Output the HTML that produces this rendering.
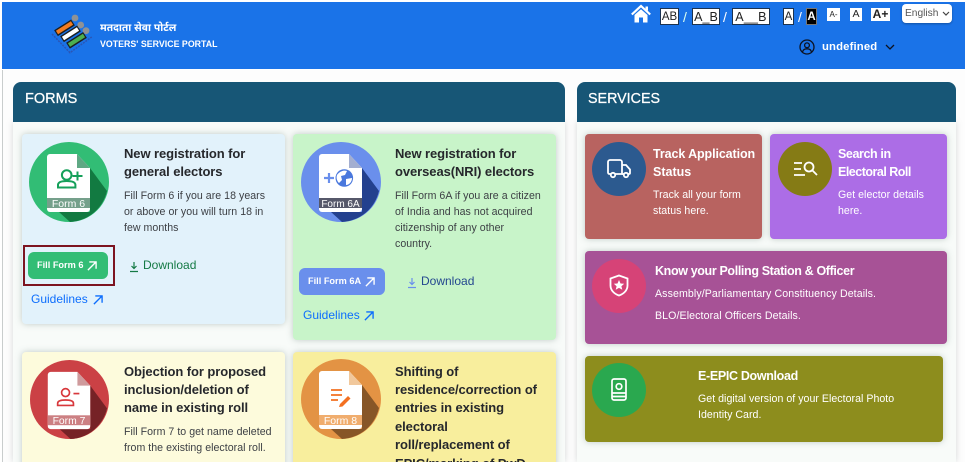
<!DOCTYPE html>
<html lang="en"><head><meta charset="utf-8"><title>Voters' Service Portal</title>
<style>
html{margin:0;padding:0;background:#fff;height:462px;overflow:hidden}
body{margin:0;padding:0;background:#fff;width:967px;height:462px;position:relative;overflow:hidden;font-family:"Liberation Sans",sans-serif}
.a{position:absolute}
.t{position:absolute;white-space:nowrap;line-height:18px}
.h{font-size:13px;font-weight:bold;color:#26282c;letter-spacing:-.08px}
.s{font-size:12.5px;font-weight:bold;color:#fff}
.d{font-size:10.6px;color:#3c3f44;letter-spacing:.03px}
.w{color:#fff}
.card{position:absolute;border-radius:4px;box-shadow:0 0 7px rgba(90,115,105,.35)}
.bx{position:absolute;background:#fff;color:#222;border:1px solid #1c3350;box-sizing:border-box;font-size:12.5px;text-align:center;white-space:nowrap;line-height:16px;height:17px}
.sm{position:absolute;background:#fff;color:#222;font-weight:bold;text-align:center;line-height:13px;height:13px}
.btn{position:absolute;border-radius:6px;color:#fff;font-size:9.2px;font-weight:bold;line-height:27px;height:27px;box-sizing:border-box;padding-left:9px;white-space:nowrap}
.l{font-size:12px;white-space:nowrap;position:absolute;line-height:16px}
svg{position:absolute;overflow:visible}
</style></head><body>
<div class="a" style="left:2px;top:70px;width:1px;height:392px;background:#c9cdcd"></div>
<div class="a" style="left:3px;top:70px;width:962px;height:392px;background:#fdfdfd"></div>
<div class="a" style="left:2px;top:2px;width:963px;height:67px;background:#1a73e8"></div>

<svg style="left:40px;top:10px" width="60" height="50" viewBox="0 0 60 50">
<circle cx="35" cy="8" r="3.400" fill="#8f9296"/><circle cx="40.700" cy="15" r="3.400" fill="#8f9296"/><circle cx="46" cy="20.700" r="3.400" fill="#8f9296"/>
<path d="M12 24l18 18.700L51.700 27" fill="none" stroke="#2b55b5" stroke-width="1.500" stroke-dasharray="2 1"/>
<g fill="none" stroke-linecap="butt"><path d="M16 23.200 33 12.400M22 29.200 39 18.400M28 35.700 45 24.900" stroke="#1b1f22" stroke-width="7"/><path d="M17 22.500 32 13" stroke="#f47c20" stroke-width="4"/><path d="M23 28.500 38 19" stroke="#fff" stroke-width="4"/><path d="M29 35 44 25.500" stroke="#4caf50" stroke-width="4"/></g>
</svg>
<div class="t w" style="left:100px;top:20px;font-family:'Liberation Sans','Noto Sans Devanagari',sans-serif;font-size:10.300px;font-weight:bold">मतदाता सेवा पोर्टल</div>
<div class="t w" style="left:100px;top:35px;font-size:8.800px;font-weight:bold;letter-spacing:.02px">VOTERS' SERVICE PORTAL</div>

<svg style="left:631px;top:5px" width="20" height="18" viewBox="0 0 20 18"><path d="M0.800 9.500 10 1l9.200 8.500" fill="none" stroke="#fff" stroke-width="2.200"/><path d="M3.500 10 10 4.200 16.500 10v7.500h-4.500v-5H8v5H3.500z" fill="#fff"/><rect x="14.500" y="1.500" width="2.500" height="4" fill="#fff"/></svg>
<div class="bx" style="left:660px;top:8px;width:19px;font-size:11.500px">AB</div>
<div class="t w" style="left:683px;top:8px;font-size:14px;color:#dfe">/</div>
<div class="bx" style="left:692px;top:8px;width:28px">A_B</div>
<div class="t w" style="left:723px;top:8px;font-size:14px">/</div>
<div class="bx" style="left:732px;top:8px;width:38px;letter-spacing:.2px">A__B</div>
<div class="bx" style="left:783px;top:8px;width:11px;font-size:11.500px">A</div>
<div class="t w" style="left:798px;top:8px;font-size:14px">/</div>
<div class="bx" style="left:806px;top:8px;width:11px;background:#000;color:#fff;border-color:#777;font-weight:bold;font-size:11.500px">A</div>
<div class="sm" style="left:827px;top:8px;width:13px;font-size:8px;font-weight:normal">A-</div>
<div class="sm" style="left:850px;top:8px;width:12px;font-size:10.500px;font-weight:normal">A</div>
<div class="sm" style="left:871px;top:8px;width:19px;font-size:12px">A+</div>
<div class="a" style="left:902px;top:4px;width:50px;height:19px;background:#fff;border-radius:4px;box-shadow:0 1px 2px rgba(0,0,0,.3);color:#555;font-size:10.200px;line-height:20px;padding-left:3px;box-sizing:border-box">English</div>
<svg style="left:942px;top:11px" width="8" height="6" viewBox="0 0 8 6"><path d="M1 1l3 3 3-3" fill="none" stroke="#444" stroke-width="1.200"/></svg>
<svg style="left:799px;top:39px" width="16" height="16" viewBox="0 0 16 16" fill="none" stroke="#0d1220" stroke-width="1.300"><circle cx="8" cy="8" r="7"/><circle cx="8" cy="6.300" r="2.400"/><path d="M3.500 13c.6-2.500 2.500-3.200 4.500-3.200s3.900.7 4.500 3.200"/></svg>
<div class="t w" style="left:822px;top:38px;font-size:11.300px;font-weight:bold;letter-spacing:.15px">undefined</div>
<svg style="left:885px;top:44px" width="10" height="7" viewBox="0 0 10 7"><path d="M1 1l4 4 4-4" fill="none" stroke="#0d1220" stroke-width="1.300"/></svg>

<div class="a" style="left:13px;top:122px;width:552px;height:340px;background:#f8fbf9;box-shadow:0 0 6px rgba(120,130,130,.3)"></div>
<div class="a" style="left:13px;top:82px;width:552px;height:40px;background:#175676;border-radius:8px 8px 0 0"></div>
<div class="t w" style="left:25px;top:90px;font-size:14.500px;line-height:18px;-webkit-text-stroke:.25px #fff">FORMS</div>
<div class="a" style="left:577px;top:122px;width:379px;height:340px;background:#f8fbf9;box-shadow:0 0 6px rgba(120,130,130,.3)"></div>
<div class="a" style="left:577px;top:82px;width:379px;height:40px;background:#175676;border-radius:8px 8px 0 0"></div>
<div class="t w" style="left:588px;top:90px;font-size:14.300px;line-height:18px;-webkit-text-stroke:.25px #fff">SERVICES</div>

<!-- Card 1 -->
<div class="card" style="left:22px;top:134px;width:263px;height:190px;background:#e2f2fb"></div>
<svg style="left:29px;top:142px" width="80" height="80" viewBox="0 0 80 80">
<circle cx="40" cy="40" r="40" fill="#32bd75"/>
<path d="M61 26 78 49A40 40 0 0 1 41 80L30 70H61z" fill="#127a41"/>
<path d="M18 15a3 3 0 0 1 3-3h27l13 14v41a3 3 0 0 1-3 3H21a3 3 0 0 1-3-3z" fill="#fff"/>
<path d="M48 12l13 14H48z" fill="#5fa884"/>
<rect x="18" y="56" width="43" height="10" fill="#75a08b"/>
<g fill="none" stroke="#15a05a" stroke-width="2"><circle cx="37.700" cy="33" r="4.800"/><path d="M29 45.500v-2.500c0-3 3-4 8.700-4s8.700 1 8.700 4v2.500z"/><path d="M43.500 34h10M48.500 29.500v9"/></g>
<text x="39.500" y="65" text-anchor="middle" font-size="10.500" fill="#fff" font-family="Liberation Sans">Form 6</text>
</svg>
<div class="t h" style="left:124px;top:145px">New registration for</div>
<div class="t h" style="left:124px;top:163px">general electors</div>
<div class="t d" style="left:124px;top:187px">Fill Form 6 if you are 18 years</div>
<div class="t d" style="left:124px;top:203px">or above or you will turn 18 in</div>
<div class="t d" style="left:124px;top:219px">few months</div>
<div class="a" style="left:23px;top:245px;width:92px;height:41px;border:2px solid #7d1420;box-sizing:border-box"></div>
<div class="btn" style="left:28px;top:252px;width:80px;background:#32bd75">Fill Form 6</div>
<svg style="left:87px;top:261px" width="10" height="10" viewBox="0 0 11 11"><path d="M1 10 10 1M2.500 1H10v7.500" fill="none" stroke="#fff" stroke-width="1.500"/></svg>
<svg style="left:129px;top:261px" width="10" height="12" viewBox="0 0 10 12"><path d="M5 1v6M2.500 5 5 7.500 7.500 5M1 10.500h8" fill="none" stroke="#157a45" stroke-width="1.200"/></svg>
<div class="l" style="left:143px;top:257px;color:#157a45">Download</div>
<div class="l" style="left:31px;top:291px;color:#0d6efd">Guidelines</div>
<svg style="left:93px;top:295px" width="10" height="10" viewBox="0 0 11 11"><path d="M1 10 10 1M2.500 1H10v7.500" fill="none" stroke="#0d6efd" stroke-width="1.500"/></svg>

<!-- Card 2 -->
<div class="card" style="left:293px;top:134px;width:263px;height:206px;background:#c8f4c9"></div>
<svg style="left:301px;top:142px" width="80" height="80" viewBox="0 0 80 80">
<circle cx="40" cy="40" r="40" fill="#6a8fec"/>
<path d="M61 26 78 49A40 40 0 0 1 41 80L30 70H61z" fill="#23408e"/>
<path d="M18 15a3 3 0 0 1 3-3h27l13 14v41a3 3 0 0 1-3 3H21a3 3 0 0 1-3-3z" fill="#fff"/>
<path d="M48 12l13 14H48z" fill="#a3aed0"/>
<rect x="18" y="56" width="43" height="10" fill="#56586a"/>
<circle cx="43.300" cy="36" r="8.800" fill="#4a78dd"/>
<path d="M36 33c3-4 7-5 10-4l-2 4-4 1 1 4-3 3c-2-2-3-5-2-8zM45 37l6-1c0 4-3 7-6 7z" fill="#fff"/>
<path d="M23 36h10M28 31v10" stroke="#6a8fec" stroke-width="2.200"/>
<text x="39.500" y="65" text-anchor="middle" font-size="10" fill="#fff" font-family="Liberation Sans">Form 6A</text>
</svg>
<div class="t h" style="left:395px;top:145px">New registration for</div>
<div class="t h" style="left:395px;top:163px">overseas(NRI) electors</div>
<div class="t d" style="left:395px;top:187px">Fill Form 6A if you are a citizen</div>
<div class="t d" style="left:395px;top:203px">of India and has not acquired</div>
<div class="t d" style="left:395px;top:219px">citizenship of any other</div>
<div class="t d" style="left:395px;top:235px">country.</div>
<div class="btn" style="left:299px;top:268px;width:86px;background:#6a8fec">Fill Form 6A</div>
<svg style="left:365px;top:277px" width="10" height="10" viewBox="0 0 11 11"><path d="M1 10 10 1M2.500 1H10v7.500" fill="none" stroke="#fff" stroke-width="1.500"/></svg>
<svg style="left:407px;top:277px" width="10" height="12" viewBox="0 0 10 12"><path d="M5 1v6M2.500 5 5 7.500 7.500 5M1 10.500h8" fill="none" stroke="#6a8fec" stroke-width="1.200"/></svg>
<div class="l" style="left:421px;top:273px;color:#24478f">Download</div>
<div class="l" style="left:303px;top:307px;color:#0d6efd">Guidelines</div>
<svg style="left:364px;top:311px" width="10" height="10" viewBox="0 0 11 11"><path d="M1 10 10 1M2.500 1H10v7.500" fill="none" stroke="#0d6efd" stroke-width="1.500"/></svg>

<!-- Card 3 -->
<div class="card" style="left:22px;top:352px;width:263px;height:120px;background:#fdfbdc"></div>
<svg style="left:30px;top:360px" width="79" height="79" viewBox="0 0 80 80">
<circle cx="40" cy="40" r="40" fill="#cb4145"/>
<path d="M61 26 78 49A40 40 0 0 1 41 80L30 70H61z" fill="#762226"/>
<path d="M18 15a3 3 0 0 1 3-3h27l13 14v41a3 3 0 0 1-3 3H21a3 3 0 0 1-3-3z" fill="#fff"/>
<path d="M48 12l13 14H48z" fill="#cf9a9c"/>
<rect x="18" y="56" width="43" height="10" fill="#cc8083"/>
<g fill="none" stroke="#d8383c" stroke-width="1.700"><circle cx="36" cy="33" r="4"/><path d="M28 46v-2c0-2.500 3-3.500 8-3.500s8 1 8 3.500v2z"/><path d="M44 34h6"/></g>
<text x="39.500" y="65" text-anchor="middle" font-size="10.500" fill="#fff" font-family="Liberation Sans">Form 7</text>
</svg>
<div class="t h" style="left:124px;top:363px">Objection for proposed</div>
<div class="t h" style="left:124px;top:381px">inclusion/deletion of</div>
<div class="t h" style="left:124px;top:399px">name in existing roll</div>
<div class="t d" style="left:124px;top:423px">Fill Form 7 to get name deleted</div>
<div class="t d" style="left:124px;top:439px">from the existing electoral roll.</div>

<!-- Card 4 -->
<div class="card" style="left:293px;top:352px;width:263px;height:120px;background:#f8ee9d"></div>
<svg style="left:301px;top:359px" width="80" height="80" viewBox="0 0 80 80">
<circle cx="40" cy="40" r="40" fill="#e39344"/>
<path d="M61 26 78 49A40 40 0 0 1 41 80L30 70H61z" fill="#875627"/>
<path d="M18 15a3 3 0 0 1 3-3h27l13 14v41a3 3 0 0 1-3 3H21a3 3 0 0 1-3-3z" fill="#fff"/>
<path d="M48 12l13 14H48z" fill="#f1c89c"/>
<rect x="18" y="56" width="43" height="10" fill="#f0ad6e"/>
<path d="M30 31h11M30 36h11M30 41h7" stroke="#f37021" stroke-width="1.800"/><path d="M38 48l1-3 8-8 2.500 2.500-8 8z" fill="#f37021"/>
<text x="39.500" y="65" text-anchor="middle" font-size="10.500" fill="#fff" font-family="Liberation Sans">Form 8</text>
</svg>
<div class="t h" style="left:395px;top:363px">Shifting of</div>
<div class="t h" style="left:395px;top:381px">residence/correction of</div>
<div class="t h" style="left:395px;top:399px">entries in existing</div>
<div class="t h" style="left:395px;top:418px">electoral</div>
<div class="t h" style="left:395px;top:436px">roll/replacement of</div>
<div class="t h" style="left:395px;top:455px">EPIC/marking of PwD</div>

<!-- Services -->
<div class="card" style="left:585px;top:134px;width:177px;height:105px;background:#b86360"></div>
<div class="a" style="left:592px;top:142px;width:54px;height:54px;border-radius:50%;background:#2c5a8f"></div>
<svg style="left:607px;top:159px" width="24" height="20" viewBox="0 0 24 20" fill="none" stroke="#fff" stroke-width="1.800"><path d="M4 15H2.500a1.500 1.500 0 0 1-1.500-1.500V3a2 2 0 0 1 2-2h10a2 2 0 0 1 2 2v12H8"/><path d="M15 6h4l4 4.500V14a1 1 0 0 1-1 1h-1M15 15h2"/><circle cx="6" cy="16" r="2.200"/><circle cx="19" cy="16" r="2.200"/></svg>
<div class="t s" style="left:653px;top:145px;letter-spacing:-.1px">Track Application</div>
<div class="t s" style="left:653px;top:163px">Status</div>
<div class="t d" style="left:653px;top:186px;color:#fff">Track all your form</div>
<div class="t d" style="left:653px;top:202px;color:#fff">status here.</div>

<div class="card" style="left:770px;top:134px;width:177px;height:105px;background:#ac6de6"></div>
<div class="a" style="left:778px;top:142px;width:54px;height:54px;border-radius:50%;background:#857b15"></div>
<svg style="left:794px;top:161px" width="24" height="16" viewBox="0 0 24 16" fill="none" stroke="#fff" stroke-width="1.800"><path d="M0 2h8M0 8h7M0 14h11"/><circle cx="15" cy="6" r="4.500"/><path d="M18 9l5 5"/></svg>
<div class="t s" style="left:838px;top:145px;letter-spacing:-.4px">Search in</div>
<div class="t s" style="left:838px;top:163px;letter-spacing:-.5px">Electoral Roll</div>
<div class="t d" style="left:838px;top:186px;color:#fff">Get elector details</div>
<div class="t d" style="left:838px;top:202px;color:#fff">here.</div>

<div class="card" style="left:585px;top:251px;width:362px;height:93px;background:#a75296"></div>
<div class="a" style="left:592px;top:259px;width:54px;height:54px;border-radius:50%;background:#d64377"></div>
<svg style="left:609px;top:274px" width="20" height="23" viewBox="0 0 20 23"><path d="M10 1.500 18.500 4.500v7c0 5-4 8.500-8.500 10-4.500-1.500-8.500-5-8.500-10v-7z" fill="none" stroke="#fff" stroke-width="1.800"/><path d="M10 6l1.500 3.500 3.700.3-2.800 2.400.9 3.600L10 13.900l-3.300 1.900.9-3.600-2.800-2.400 3.700-.3z" fill="#fff"/></svg>
<div class="t s" style="left:655px;top:262px;letter-spacing:-.36px">Know your Polling Station &amp; Officer</div>
<div class="t d" style="left:655px;top:285px;color:#fff;letter-spacing:.1px">Assembly/Parliamentary Constituency Details.</div>
<div class="t d" style="left:655px;top:307px;color:#fff;letter-spacing:.1px">BLO/Electoral Officers Details.</div>

<div class="card" style="left:585px;top:356px;width:358px;height:86px;background:#8d8d1d"></div>
<div class="a" style="left:592px;top:363px;width:54px;height:54px;border-radius:50%;background:#2aa84f"></div>
<svg style="left:611px;top:378px" width="16" height="23" viewBox="0 0 16 23" fill="none" stroke="#fff" stroke-width="1.700"><rect x="1" y="1" width="14" height="21" rx="2"/><path d="M1 15h14M1 18.500h14"/><circle cx="8" cy="8.500" r="2.800"/></svg>
<div class="t s" style="left:698px;top:367px;letter-spacing:-.33px">E-EPIC Download</div>
<div class="t d" style="left:698px;top:390px;color:#fff">Get digital version of your Electoral Photo</div>
<div class="t d" style="left:698px;top:406px;color:#fff">Identity Card.</div>
</body></html>
